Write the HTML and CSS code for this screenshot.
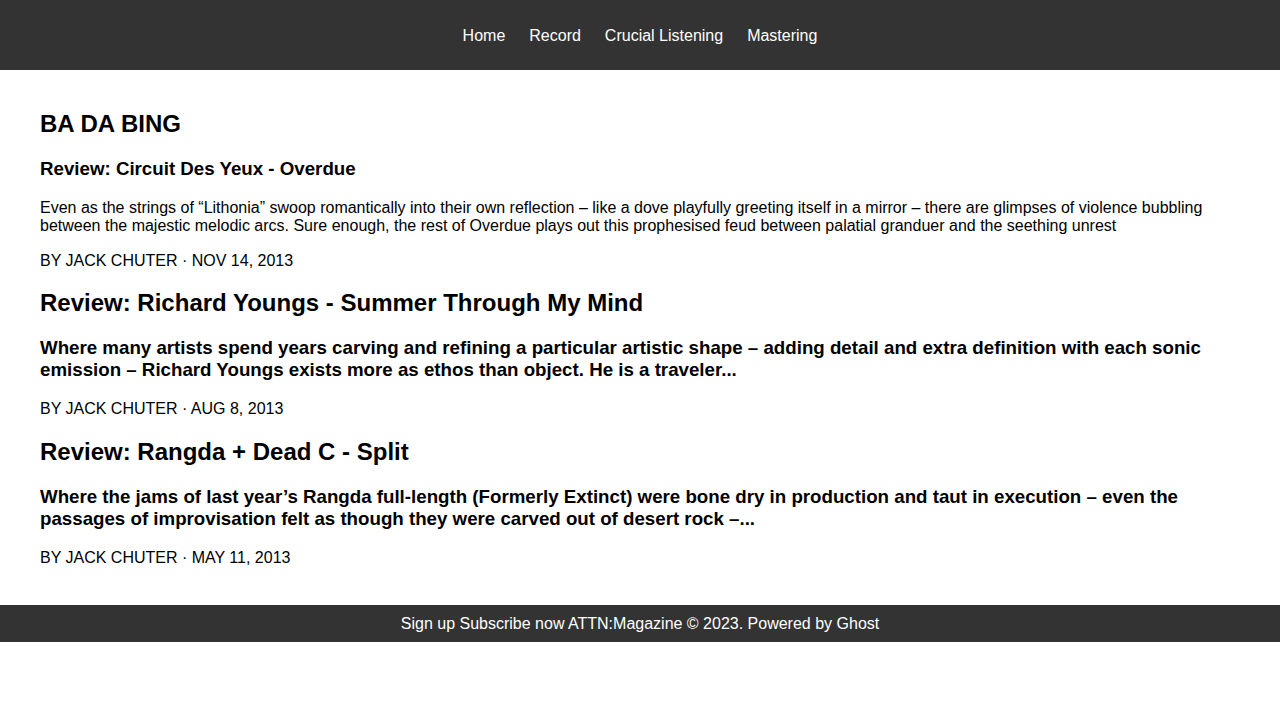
FILE: index.html
```html
<!DOCTYPE html>
<html lang="en">
<head>
<meta charset="utf-8">
<title>BA DA BING - ATTN:Magazine</title>
<link rel="stylesheet" href="styles.css">
</head>
<body>
<header class="site-header">
  <nav class="site-nav">
    <a href="#">Home</a>
    <a href="#">Record</a>
    <a href="#">Crucial Listening</a>
    <a href="#">Mastering</a>
  </nav>
</header>
<main class="site-main">
  <h2 class="tag-title">BA DA BING</h2>
  <article class="post">
    <h3 class="post-title">Review: Circuit Des Yeux - Overdue</h3>
    <p class="post-excerpt">Even as the strings of “Lithonia” swoop romantically into their own reflection – like a dove playfully greeting itself in a mirror – there are glimpses of violence bubbling between the majestic melodic arcs. Sure enough, the rest of Overdue plays out this prophesised feud between palatial granduer and the seething unrest</p>
    <p class="post-meta">BY JACK CHUTER · NOV 14, 2013</p>
  </article>
  <article class="post">
    <h2 class="post-title">Review: Richard Youngs - Summer Through My Mind</h2>
    <h3 class="post-excerpt">Where many artists spend years carving and refining a particular artistic shape – adding detail and extra definition with each sonic emission – Richard Youngs exists more as ethos than object. He is a traveler...</h3>
    <p class="post-meta">BY JACK CHUTER · AUG 8, 2013</p>
  </article>
  <article class="post">
    <h2 class="post-title">Review: Rangda + Dead C - Split</h2>
    <h3 class="post-excerpt">Where the jams of last year’s Rangda full-length (Formerly Extinct) were bone dry in production and taut in execution – even the passages of improvisation felt as though they were carved out of desert rock –...</h3>
    <p class="post-meta">BY JACK CHUTER · MAY 11, 2013</p>
  </article>
</main>
<footer class="site-footer">
  <span>Sign up</span> <span>Subscribe now</span> <span>ATTN:Magazine © 2023.</span> <span>Powered by Ghost</span>
</footer>
</body>
</html>
```
FILE: styles.css
```css
html, body {
  margin: 0;
  padding: 0;
  background: #fff;
  color: #000;
  font-family: "Liberation Sans", Arial, sans-serif;
  font-size: 16px;
}

.site-header {
  background: #333;
  height: 70px;
  padding-top: 1px;
  box-sizing: border-box;
  display: flex;
  align-items: center;
  justify-content: center;
}

.site-nav {
  display: flex;
  gap: 24px;
}

.site-nav a {
  color: #fff;
  text-decoration: none;
  font-size: 16px;
}

.site-main {
  padding: 20px 40px 22px;
}

.site-main h2 {
  font-size: 24px;
  margin: 19.92px 0;
}

.site-main h3 {
  font-size: 18.72px;
  margin: 18.72px 0;
}

.site-main p {
  margin: 16px 0;
}

.site-main .post-meta {
  margin-top: 17px;
}

.site-footer {
  background: #333;
  color: #fff;
  text-align: center;
  padding: 10.5px 0 8.5px;
  font-size: 16px;
}
```
